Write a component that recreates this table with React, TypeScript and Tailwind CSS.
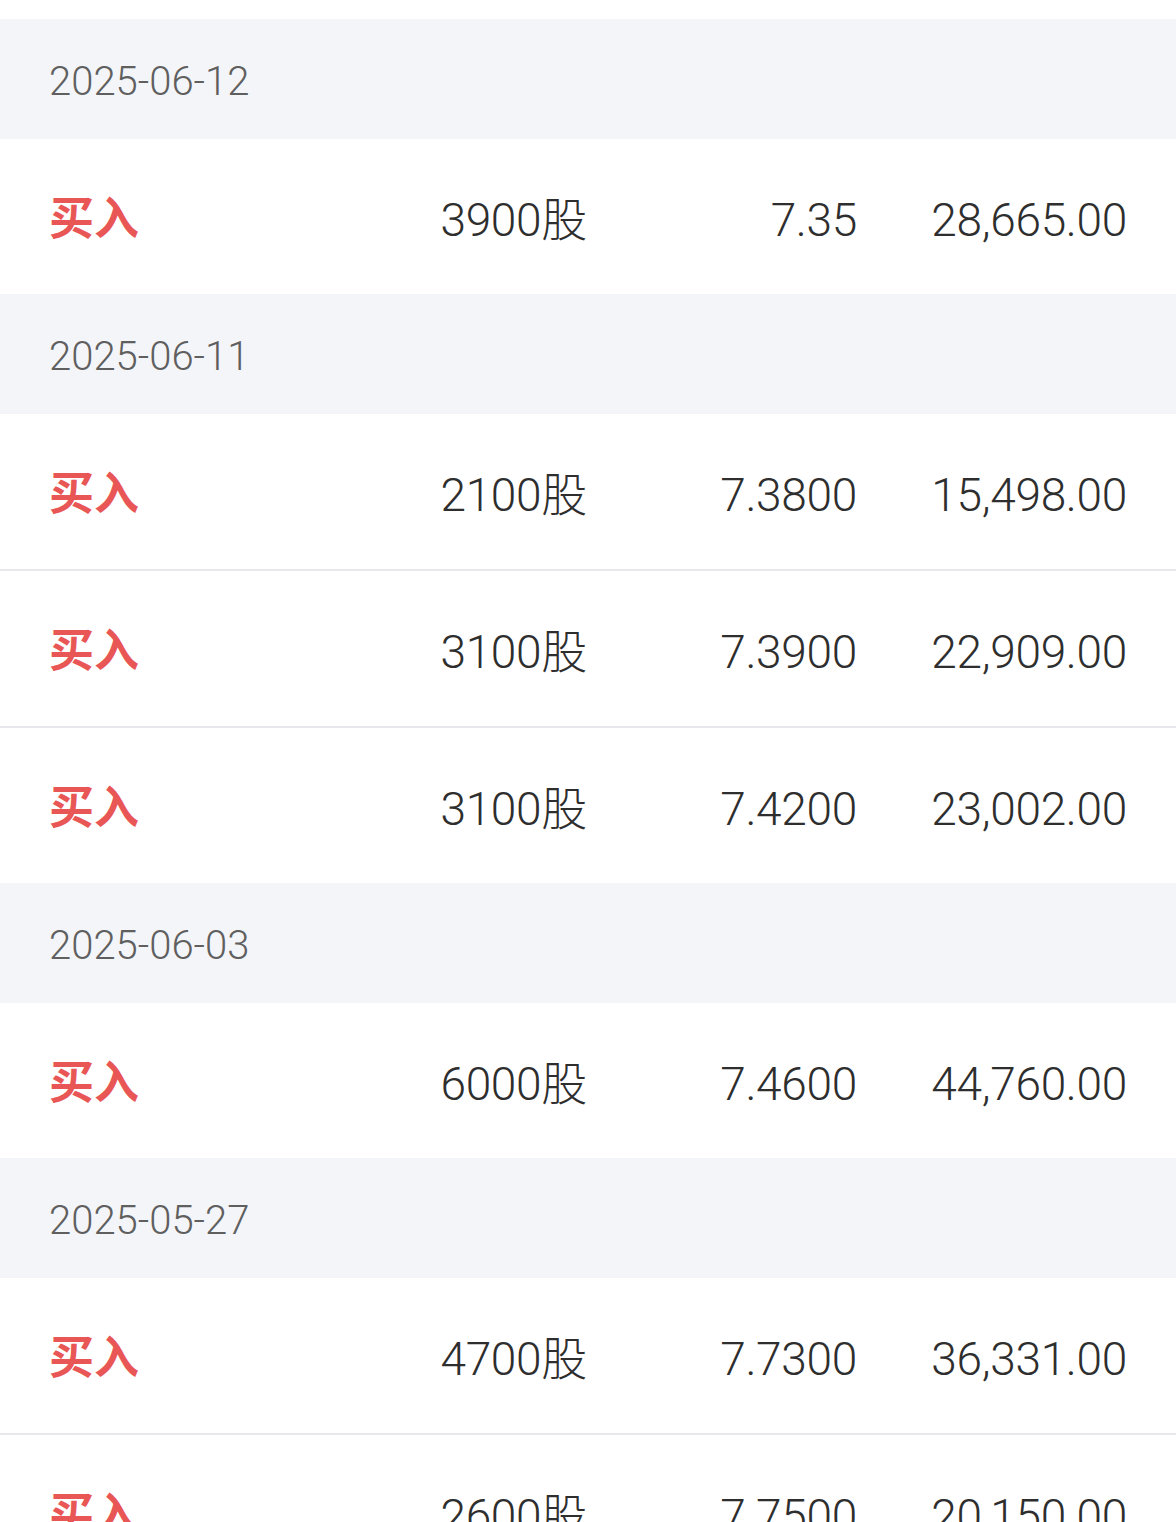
import React from 'react';

type Trade = { side: string; shares: string; price: string; amount: string };
type Group = { date: string; trades: Trade[] };

const groups: Group[] = [
  { date: '2025-06-12', trades: [{ side: '买入', shares: '3900股', price: '7.35', amount: '28,665.00' }] },
  {
    date: '2025-06-11',
    trades: [
      { side: '买入', shares: '2100股', price: '7.3800', amount: '15,498.00' },
      { side: '买入', shares: '3100股', price: '7.3900', amount: '22,909.00' },
      { side: '买入', shares: '3100股', price: '7.4200', amount: '23,002.00' },
    ],
  },
  { date: '2025-06-03', trades: [{ side: '买入', shares: '6000股', price: '7.4600', amount: '44,760.00' }] },
  {
    date: '2025-05-27',
    trades: [
      { side: '买入', shares: '4700股', price: '7.7300', amount: '36,331.00' },
      { side: '买入', shares: '2600股', price: '7.7500', amount: '20,150.00' },
    ],
  },
];

const font = { fontFamily: 'Roboto, "Noto Sans CJK SC", sans-serif' };

const App: React.FC = () => {
  return (
    <div className="w-[1176px] h-[1522px] overflow-hidden bg-white pt-[19px]" style={font}>
      {groups.map((group) => (
        <section key={group.date}>
          <div className="h-[120px] bg-[#f4f5f9] flex items-center px-[49px] pt-[6px] text-[40px] font-light text-[#5f5f5f]">
            {group.date}
          </div>
          {group.trades.map((t, i) => {
            const last = i === group.trades.length - 1;
            return (
              <div
                key={i}
                className={`grid grid-cols-[1fr_270px_270px_270px] items-center px-[49px] pt-[7px] text-[46px] font-light tracking-[-0.3px] text-[#2e2e2e] ${
                  last ? 'h-[155px]' : 'h-[157px] border-b-2 border-[#e7e7ec]'
                }`}
              >
                <span className="text-[#e85656] font-bold text-[45px] tracking-normal">{t.side}</span>
                <span className="text-right">{t.shares}</span>
                <span className="text-right">{t.price}</span>
                <span className="text-right">{t.amount}</span>
              </div>
            );
          })}
        </section>
      ))}
    </div>
  );
};

export default App;
